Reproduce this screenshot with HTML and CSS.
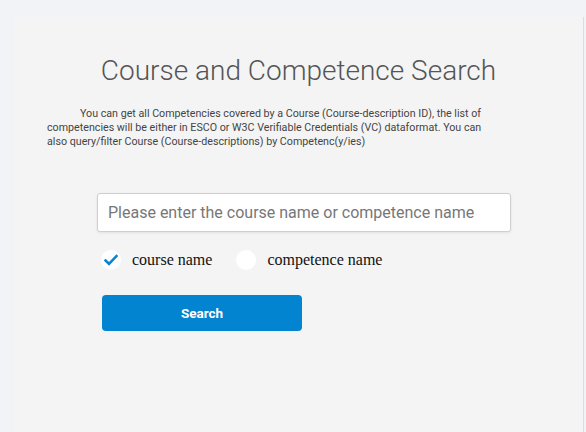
FILE: index.html
```html
<!DOCTYPE html>
<html>
<head>
<meta charset="utf-8">
<link rel="stylesheet" href="styles.css">
</head>
<body>
<div class="card">
  <h1 class="title">Course and Competence Search</h1>
  <p class="intro">You can get all Competencies covered by a Course (Course-description ID), the list of competencies will be either in ESCO or W3C Verifiable Credentials (VC) dataformat. You can also query/filter Course (Course-descriptions) by Competenc(y/ies)</p>
  <div class="form">
    <input class="search-input" type="text" placeholder="Please enter the course name or competence name">
    <div class="options">
      <label class="option">
        <span class="circle">
          <svg width="14" height="12" viewBox="0 0 14 12"><path d="M1.5 6.5 L5 9.8 L12.5 2" fill="none" stroke="#0a84d0" stroke-width="2.6" stroke-linecap="square"/></svg>
        </span>
        <span class="opt-label">course name</span>
      </label>
      <label class="option">
        <span class="circle"></span>
        <span class="opt-label">competence name</span>
      </label>
    </div>
    <button class="btn">Search</button>
  </div>
</div>
</body>
</html>
```
FILE: styles.css
```css
html, body {
  margin: 0;
  padding: 0;
  height: 100%;
}
body {
  background: #f2f3f6;
  font-family: Roboto, "Liberation Sans", sans-serif;
  overflow: hidden;
}
.card {
  margin: 17px 2px 0 14px;
  height: calc(100% - 17px);
  background: #f4f4f4;
  border-right: 1px solid #dcdcdc;
  box-sizing: border-box;
  padding-top: 36px;
}
.title {
  margin: 0;
  text-align: center;
  font-weight: 300;
  font-size: 28px;
  line-height: 36px;
  color: #555;
}
.intro {
  margin: 18px 0 0 33px;
  width: 445px;
  text-indent: 33px;
  font-size: 10.7px;
  line-height: 14px;
  color: #444;
}
.form {
  margin: 44px 0 0 83px;
  width: 414px;
}
.search-input {
  display: block;
  box-sizing: border-box;
  width: 414px;
  height: 39px;
  border: 1px solid #cfcfcf;
  border-radius: 3px;
  background: #fff;
  box-shadow: 0 1px 3px rgba(0,0,0,0.08);
  padding: 0 10px;
  font-family: Roboto, "Liberation Sans", sans-serif;
  font-size: 16px;
  color: #333;
  outline: none;
}
.search-input::placeholder {
  color: #777;
}
.options {
  display: flex;
  align-items: center;
  margin-top: 18px;
  padding-left: 4px;
}
.option {
  display: flex;
  align-items: center;
  margin-right: 24px;
}
.circle {
  width: 20px;
  height: 20px;
  border-radius: 50%;
  background: #fff;
  display: flex;
  align-items: center;
  justify-content: center;
}
.opt-label {
  margin-left: 11px;
  font-family: "Liberation Serif", serif;
  font-size: 16px;
  color: #111;
}
.btn {
  display: block;
  margin: 25px 0 0 5px;
  width: 200px;
  height: 36px;
  border: none;
  border-radius: 4px;
  background: #0284d0;
  color: #fff;
  font-family: Roboto, "Liberation Sans", sans-serif;
  font-weight: 700;
  font-size: 13.5px;
}
```
